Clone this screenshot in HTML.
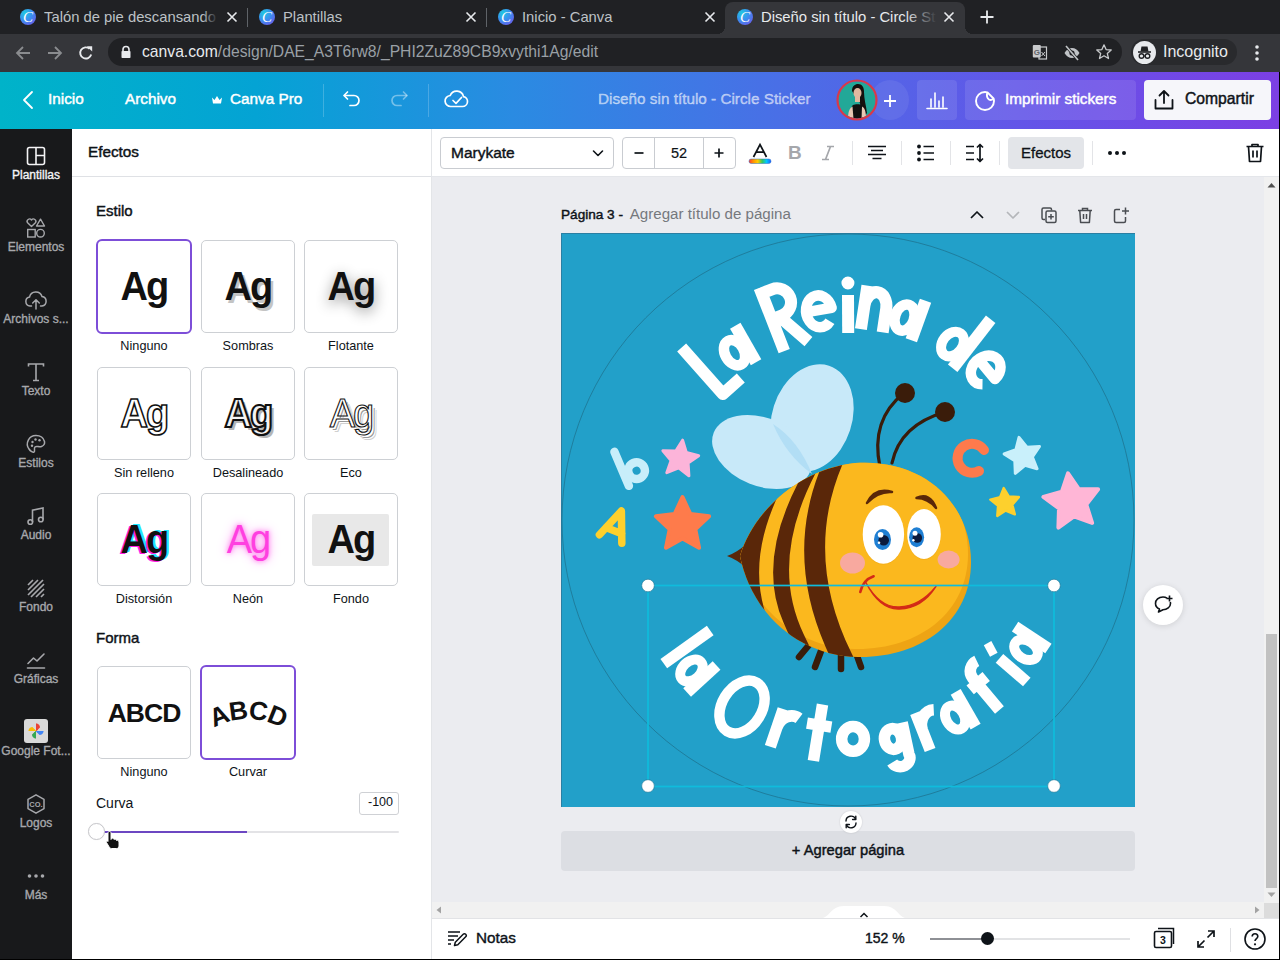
<!DOCTYPE html>
<html><head><meta charset="utf-8">
<style>
*{box-sizing:border-box;margin:0;padding:0}
html,body{width:1280px;height:960px;overflow:hidden;font-family:"Liberation Sans",sans-serif;background:#ebecf0}
.a{position:absolute}
svg{display:block}
#tabs{left:0;top:0;width:1280px;height:34px;background:#202124}
#addr{left:0;top:34px;width:1280px;height:38px;background:#35363a}
#hdr{left:0;top:72px;width:1280px;height:57px;background:linear-gradient(90deg,#00b3c9 0%,#04a3d4 20%,#2a8be2 40%,#4870e6 60%,#6355e8 80%,#7c3fe4 100%)}
#side{left:0;top:129px;width:72px;height:831px;background:#18191b}
#panel{left:72px;top:129px;width:360px;height:831px;background:#fff}
#tool{left:432px;top:129px;width:848px;height:48px;background:#fff;border-bottom:1px solid #e4e6ea}
#bot{left:432px;top:918px;width:848px;height:42px;background:#fff}
.tabt{top:8px;font-size:14.8px;line-height:18px;color:#bdc1c6;white-space:nowrap;overflow:hidden}
.fav{width:16px;height:16px;border-radius:50%;background:radial-gradient(circle at 30% 25%,#1fc8e0 0%,#3a8ef0 45%,#7a4ae8 100%)}
.fav i{position:absolute;left:3px;top:-1px;font-family:"Liberation Serif",serif;font-style:italic;font-size:15px;color:#fff;line-height:18px}
.ht{top:17px;font-size:15.3px;line-height:20px;font-weight:normal;-webkit-text-stroke:0.45px currentColor;color:#fff;white-space:nowrap}
.sl{left:0;width:72px;text-align:center;font-size:12px;line-height:14px;font-weight:normal;-webkit-text-stroke:0.35px currentColor;white-space:nowrap}
.ph{font-size:15px;font-weight:normal;-webkit-text-stroke:0.45px currentColor;line-height:18px;color:#0e1318;white-space:nowrap}
.tile{border:1px solid #cdd0d4;border-radius:5px;background:#fff}
.tile.sel{border:2px solid #7d4ed8;border-radius:6px}
.ag{width:94px;text-align:center;font-size:40px;line-height:44px;font-weight:bold;color:#111;letter-spacing:-2px;transform:scaleX(0.95)}
.tl{width:114px;text-align:center;font-size:12.7px;line-height:16px;color:#0e1318;white-space:nowrap}
.tb{font-size:15.4px;font-weight:normal;-webkit-text-stroke:0.4px currentColor;line-height:20px;color:#0e1318;white-space:nowrap}
</style></head><body>
<div id="tabs" class="a">
  <div class="a" style="left:725px;top:2px;width:240px;height:34px;background:#35363a;border-radius:8px 8px 0 0"></div>
  <div class="a" style="left:717px;top:26px;width:8px;height:8px;background:radial-gradient(circle at 0 0,#202124 8px,#35363a 8px)"></div>
  <div class="a" style="left:965px;top:26px;width:8px;height:8px;background:radial-gradient(circle at 100% 0,#202124 8px,#35363a 8px)"></div>
  <div class="a" style="left:247px;top:8px;width:1px;height:19px;background:#5f6368"></div>
  <div class="a" style="left:486px;top:8px;width:1px;height:19px;background:#5f6368"></div>
  <!-- favicons -->
  <div class="fav a" style="left:20px;top:9px"><i>C</i></div>
  <div class="fav a" style="left:259px;top:9px"><i>C</i></div>
  <div class="fav a" style="left:498px;top:9px"><i>C</i></div>
  <div class="fav a" style="left:737px;top:9px"><i>C</i></div>
  <div class="a tabt" style="left:44px;width:174px;">Talón de pie descansando s</div>
  <div class="a tabt" style="left:283px;width:170px;">Plantillas</div>
  <div class="a tabt" style="left:522px;width:170px;">Inicio - Canva</div>
  <div class="a tabt" style="left:761px;width:176px;color:#e8eaed">Diseño sin título - Circle St</div>
  <div class="a" style="left:202px;top:6px;width:16px;height:22px;background:linear-gradient(90deg,rgba(32,33,36,0),#202124)"></div>
  <div class="a" style="left:905px;top:6px;width:32px;height:22px;background:linear-gradient(90deg,rgba(53,54,58,0),#35363a)"></div>
  <svg class="a" style="left:226px;top:11px" width="12" height="12"><path d="M1.5 1.5L10.5 10.5M10.5 1.5L1.5 10.5" stroke="#e8eaed" stroke-width="1.6"/></svg>
  <svg class="a" style="left:465px;top:11px" width="12" height="12"><path d="M1.5 1.5L10.5 10.5M10.5 1.5L1.5 10.5" stroke="#e8eaed" stroke-width="1.6"/></svg>
  <svg class="a" style="left:704px;top:11px" width="12" height="12"><path d="M1.5 1.5L10.5 10.5M10.5 1.5L1.5 10.5" stroke="#e8eaed" stroke-width="1.6"/></svg>
  <svg class="a" style="left:943px;top:11px" width="12" height="12"><path d="M1.5 1.5L10.5 10.5M10.5 1.5L1.5 10.5" stroke="#e8eaed" stroke-width="1.6"/></svg>
  <svg class="a" style="left:979px;top:9px" width="16" height="16"><path d="M8 1.5V14.5M1.5 8H14.5" stroke="#e8eaed" stroke-width="1.8"/></svg>
</div>
<div id="addr" class="a">
  <svg class="a" style="left:14px;top:10px" width="18" height="18"><path d="M16 9H3M9 3L3 9L9 15" stroke="#8a8c8f" stroke-width="1.8" fill="none"/></svg>
  <svg class="a" style="left:46px;top:10px" width="18" height="18"><path d="M2 9H15M9 3L15 9L9 15" stroke="#8a8c8f" stroke-width="1.8" fill="none"/></svg>
  <svg class="a" style="left:77px;top:10px" width="18" height="18"><path d="M14.2 10.5A5.6 5.6 0 1 1 12.6 4.8" stroke="#e8eaed" stroke-width="1.9" fill="none"/><path d="M9.8 2.2H15.2V7.6Z" fill="#e8eaed"/></svg>
  <div class="a" style="left:108px;top:4px;width:1014px;height:28px;border-radius:14px;background:#202124"></div>
  <svg class="a" style="left:120px;top:11px" width="12" height="14"><path d="M3 6V4.5A3 3 0 0 1 9 4.5V6" stroke="#e8eaed" stroke-width="1.6" fill="none"/><rect x="1.5" y="6" width="9" height="7" rx="0.8" fill="#e8eaed"/></svg>
  <div class="a" style="left:142px;top:9px;font-size:15.7px;line-height:18px;color:#9aa0a6;white-space:nowrap"><span style="color:#e8eaed">canva.com</span>/design/DAE_A3T6rw8/_PHI2ZuZ89CB9xvythi1Ag/edit</div>
  <!-- translate -->
  <svg class="a" style="left:1032px;top:10px" width="18" height="18"><rect x="7" y="3" width="7.5" height="12" fill="none" stroke="#c8cacc" stroke-width="1.2"/><rect x="0.8" y="1" width="8" height="12.5" rx="1" fill="#c8cacc"/><text x="1.8" y="10.5" font-size="8" font-family="Liberation Sans" font-weight="bold" fill="#5f6368">G</text><path d="M9.5 8L13 12M13 8L9.5 12" stroke="#c8cacc" stroke-width="1"/></svg>
  <!-- eye off -->
  <svg class="a" style="left:1063px;top:10px" width="18" height="18"><path d="M1.5 9C3.5 5.5 6 4 9 4S14.5 5.5 16.5 9C14.5 12.5 12 14 9 14S3.5 12.5 1.5 9Z" fill="#c0c3c6"/><circle cx="9" cy="9" r="2.6" fill="#202124"/><path d="M3 2L15 16" stroke="#202124" stroke-width="3"/><path d="M3 2L15 16" stroke="#c0c3c6" stroke-width="1.6"/></svg>
  <!-- star -->
  <svg class="a" style="left:1095px;top:9px" width="18" height="18"><path d="M9 1.8L11.1 6.6L16.2 7L12.3 10.4L13.5 15.5L9 12.8L4.5 15.5L5.7 10.4L1.8 7L6.9 6.6Z" stroke="#c8cacc" stroke-width="1.3" fill="none" stroke-linejoin="round"/></svg>
  <div class="a" style="left:1131px;top:5px;width:106px;height:26px;border-radius:13px;background:#292a2d"></div>
  <div class="a" style="left:1133px;top:7px;width:23px;height:23px;border-radius:50%;background:#e8eaed"></div>
  <svg class="a" style="left:1133px;top:7px" width="23" height="23"><path d="M5 11H18" stroke="#202124" stroke-width="1.6"/><path d="M7.5 10.5L8.5 5.5H14.5L15.5 10.5Z" fill="#202124"/><circle cx="8.5" cy="15" r="2.3" stroke="#202124" stroke-width="1.4" fill="none"/><circle cx="14.5" cy="15" r="2.3" stroke="#202124" stroke-width="1.4" fill="none"/><path d="M10.8 15H12.2" stroke="#202124" stroke-width="1.2"/></svg>
  <div class="a" style="left:1163px;top:8px;font-size:16px;line-height:20px;color:#e8eaed">Incognito</div>
  <svg class="a" style="left:1253px;top:9px" width="8" height="20"><circle cx="4" cy="4" r="1.8" fill="#e8eaed"/><circle cx="4" cy="10" r="1.8" fill="#e8eaed"/><circle cx="4" cy="16" r="1.8" fill="#e8eaed"/></svg>
</div>
<div id="hdr" class="a">
  <svg class="a" style="left:21px;top:18px" width="14" height="20"><path d="M11 2L3 10L11 18" stroke="#fff" stroke-width="1.8" fill="none" stroke-linecap="round" stroke-linejoin="round"/></svg>
  <div class="a ht" style="left:48px">Inicio</div>
  <div class="a ht" style="left:125px">Archivo</div>
  <svg class="a" style="left:211px;top:23px" width="12" height="10"><path d="M1 2.5L3.5 5L6 1L8.5 5L11 2.5L10 8.5H2Z" fill="#fff"/></svg>
  <div class="a ht" style="left:230px">Canva Pro</div>
  <div class="a" style="left:323px;top:12px;width:1px;height:33px;background:rgba(255,255,255,0.2)"></div>
  <svg class="a" style="left:341px;top:17px" width="22" height="22"><path d="M6.5 3L3 6.5L6.5 10" stroke="#fff" stroke-width="1.7" fill="none" stroke-linecap="round" stroke-linejoin="round"/><path d="M3.5 6.5H13A5 5 0 0 1 13 16.5H9" stroke="#fff" stroke-width="1.7" fill="none" stroke-linecap="round"/></svg>
  <svg class="a" style="left:388px;top:17px" width="22" height="22"><path d="M15.5 3L19 6.5L15.5 10" stroke="rgba(255,255,255,0.4)" stroke-width="1.7" fill="none" stroke-linecap="round" stroke-linejoin="round"/><path d="M18.5 6.5H9A5 5 0 0 0 9 16.5H13" stroke="rgba(255,255,255,0.4)" stroke-width="1.7" fill="none" stroke-linecap="round"/></svg>
  <div class="a" style="left:428px;top:12px;width:1px;height:33px;background:rgba(255,255,255,0.2)"></div>
  <svg class="a" style="left:444px;top:15px" width="26" height="24"><path d="M7 19.5H18.5A5 5 0 0 0 19.5 9.6A7 7 0 0 0 6.2 8.5A5.5 5.5 0 0 0 7 19.5Z" stroke="#fff" stroke-width="1.7" fill="none" stroke-linejoin="round"/><path d="M9 13.5L12 16.3L17.5 10.5" stroke="#fff" stroke-width="1.7" fill="none" stroke-linecap="round" stroke-linejoin="round"/></svg>
  <div class="a ht" style="left:598px;color:rgba(255,255,255,0.55)">Diseño sin título - Circle Sticker</div>
  <!-- avatar -->
  <div class="a" style="left:871px;top:8px;width:38px;height:40px;border-radius:50%;background:rgba(255,255,255,0.07)"></div>
  <svg class="a" style="left:836px;top:7px" width="42" height="42">
    <defs><clipPath id="av"><circle cx="21" cy="21" r="18.5"/></clipPath></defs>
    <circle cx="21" cy="21" r="18.5" fill="#22a898"/>
    <g clip-path="url(#av)">
      <path d="M16 12C16 7 19 5 22 5C26 5 28 8 28 13C28 20 30 26 31 34L26 40L24 24Z" fill="#15110e"/>
      <ellipse cx="21.5" cy="14" rx="4" ry="5" fill="#e0b8a0"/>
      <path d="M19 18H24V23H19Z" fill="#e0b8a0"/>
      <path d="M13 42C13 33 15 28 17 26C19 25 24 25 26 26C28 28 30 33 30 42Z" fill="#111"/>
      <path d="M12 40C12 33 13.5 29 16.5 27.5L17.5 40Z" fill="#e8c8b4"/><path d="M30 40C30 33 29 29 26 27.5L25.5 40Z" fill="#e8c8b4"/>
    </g>
    <circle cx="21" cy="21" r="19.5" stroke="#d83a48" stroke-width="2.2" fill="none"/>
  </svg>
  <svg class="a" style="left:883px;top:22px" width="14" height="14"><path d="M7 1V13M1 7H13" stroke="#fff" stroke-width="1.8"/></svg>
  <div class="a" style="left:917px;top:8px;width:40px;height:40px;border-radius:4px;background:rgba(255,255,255,0.1)"></div>
  <svg class="a" style="left:925px;top:16px" width="24" height="24"><path d="M2 20.5H22M6 19V11M10 19V5M14 19V13M18 19V9" stroke="#fff" stroke-width="1.6" stroke-linecap="round"/></svg>
  <div class="a" style="left:965px;top:8px;width:171px;height:40px;border-radius:4px;background:rgba(255,255,255,0.1)"></div>
  <svg class="a" style="left:973px;top:17px" width="24" height="24"><path d="M12 3A9 9 0 1 0 21 12C21 11 20.8 10.4 20.6 9.6L14.4 3.4C13.6 3.2 13 3 12 3Z" stroke="#fff" stroke-width="1.9" fill="none"/><path d="M14.3 3.4C13.5 6.5 14 9 16 10.5C17.5 11.4 19 11 20.6 9.6" stroke="#fff" stroke-width="1.9" fill="none"/></svg>
  <div class="a ht" style="left:1005px">Imprimir stickers</div>
  <div class="a" style="left:1144px;top:8px;width:127px;height:40px;border-radius:4px;background:#f6f6fa"></div>
  <svg class="a" style="left:1152px;top:16px" width="24" height="24"><path d="M12 15V3.5M7.5 7.5L12 3L16.5 7.5" stroke="#0e1318" stroke-width="1.8" fill="none" stroke-linecap="round" stroke-linejoin="round"/><path d="M3.5 12V20.5H20.5V12" stroke="#0e1318" stroke-width="1.8" fill="none" stroke-linecap="round" stroke-linejoin="round"/></svg>
  <div class="a ht" style="left:1185px;color:#0e1318;font-size:15.7px">Compartir</div>
</div>
<div id="side" class="a">
<svg class="a" style="left:24px;top:15px" width="24" height="24"><rect x="3.5" y="3.5" width="17" height="17" rx="2" stroke="#f4f4f6" stroke-width="1.6" fill="none"/><path d="M12 3.5V20.5M12 11.5H20.5" stroke="#f4f4f6" stroke-width="1.6"/></svg>
<div class="a sl" style="top:39px;color:#f4f4f6">Plantillas</div>
<svg class="a" style="left:24px;top:87px" width="24" height="24"><path d="M7.5 10.5L3.6 6.8A2.2 2.2 0 0 1 7.5 4A2.2 2.2 0 0 1 11.4 6.8Z" stroke="#a7a8ac" stroke-width="1.4" fill="none" stroke-linejoin="round"/><path d="M16.5 3.2L20.5 10H12.5Z" stroke="#a7a8ac" stroke-width="1.4" fill="none" stroke-linejoin="round"/><rect x="3.7" y="13.5" width="7.5" height="7.5" stroke="#a7a8ac" stroke-width="1.4" fill="none"/><circle cx="16.5" cy="17.2" r="3.8" stroke="#a7a8ac" stroke-width="1.4" fill="none"/></svg>
<div class="a sl" style="top:111px;color:#a7a8ac">Elementos</div>
<svg class="a" style="left:24px;top:159px" width="24" height="24"><path d="M7.5 18H6A4.5 4.5 0 0 1 5.5 9.1A6.5 6.5 0 0 1 18 8.5A4.8 4.8 0 0 1 18 18H16.5" stroke="#a7a8ac" stroke-width="1.5" fill="none" stroke-linecap="round"/><path d="M12 21V12M8.7 15L12 11.7L15.3 15" stroke="#a7a8ac" stroke-width="1.5" fill="none" stroke-linecap="round" stroke-linejoin="round"/></svg>
<div class="a sl" style="top:183px;color:#a7a8ac">Archivos s...</div>
<svg class="a" style="left:24px;top:231px" width="24" height="24"><path d="M4.5 6.5V4H19.5V6.5M12 4V20.5M9 20.5H15" stroke="#a7a8ac" stroke-width="1.6" fill="none"/></svg>
<div class="a sl" style="top:255px;color:#a7a8ac">Texto</div>
<svg class="a" style="left:24px;top:303px" width="24" height="24"><path d="M12 3.5A8.5 8.5 0 0 0 5 17C6.5 19.5 9 20.5 10 20C11.5 19.2 9.5 16.5 11 15C12.5 13.5 15 15.5 17.5 14.5C20 13.5 20.8 11 20.5 9.5C19.5 5.8 16 3.5 12 3.5Z" stroke="#a7a8ac" stroke-width="1.5" fill="none"/><circle cx="8.5" cy="10" r="1.2" fill="#a7a8ac"/><circle cx="11.5" cy="7.5" r="1.2" fill="#a7a8ac"/><circle cx="15.5" cy="8.2" r="1.2" fill="#a7a8ac"/><circle cx="8" cy="13.8" r="1.2" fill="#a7a8ac"/></svg>
<div class="a sl" style="top:327px;color:#a7a8ac">Estilos</div>
<svg class="a" style="left:24px;top:375px" width="24" height="24"><path d="M8.5 18V6.2L19 4V15.5" stroke="#a7a8ac" stroke-width="1.6" fill="none"/><circle cx="6.3" cy="18" r="2.3" stroke="#a7a8ac" stroke-width="1.6" fill="none"/><circle cx="16.8" cy="15.5" r="2.3" stroke="#a7a8ac" stroke-width="1.6" fill="none"/></svg>
<div class="a sl" style="top:399px;color:#a7a8ac">Audio</div>
<svg class="a" style="left:24px;top:447px" width="24" height="24"><path d="M4 9L9 4M4 14L14 4M4 19L19 4M7 21L20 8M12 21L20 13M17 21L20 18" stroke="#a7a8ac" stroke-width="1.7"/></svg>
<div class="a sl" style="top:471px;color:#a7a8ac">Fondo</div>
<svg class="a" style="left:24px;top:519px" width="24" height="24"><path d="M4 15.5L9.5 10L13 13L20 6" stroke="#a7a8ac" stroke-width="1.6" fill="none" stroke-linecap="round" stroke-linejoin="round"/><path d="M3.5 20H20.5" stroke="#a7a8ac" stroke-width="1.6" stroke-linecap="round"/></svg>
<div class="a sl" style="top:543px;color:#a7a8ac">Gráficas</div>
<div class="a" style="left:24px;top:590px;width:24px;height:24px;border-radius:3px;background:#d9d9d9"></div><svg class="a" style="left:24px;top:590px" width="24" height="24"><path d="M12 12V4.5A4 4 0 0 1 12 12Z" fill="#ea4335"/><path d="M12 12H19.5A4 4 0 0 1 12 12Z" fill="#4285f4"/><path d="M12 12V19.5A4 4 0 0 1 12 12Z" fill="#34a853"/><path d="M12 12H4.5A4 4 0 0 1 12 12Z" fill="#fbbc04"/><path d="M12 12L12 4.5C14.5 4.5 16 6.5 16 8.5L12 12Z" fill="#ea4335"/><path d="M12 12H19.5C19.5 14.5 17.5 16 15.5 16Z" fill="#4285f4"/><path d="M12 12V19.5C9.5 19.5 8 17.5 8 15.5Z" fill="#34a853"/><path d="M12 12H4.5C4.5 9.5 6.5 8 8.5 8Z" fill="#fbbc04"/></svg>
<div class="a sl" style="top:615px;color:#a7a8ac">Google Fot...</div>
<svg class="a" style="left:24px;top:663px" width="24" height="24"><path d="M12 2.8L20 7.4V16.6L12 21.2L4 16.6V7.4Z" stroke="#a7a8ac" stroke-width="1.5" fill="none" stroke-linejoin="round"/><text x="12" y="15" text-anchor="middle" font-family="Liberation Sans" font-weight="bold" font-size="7.5" fill="#a7a8ac">CO.</text></svg>
<div class="a sl" style="top:687px;color:#a7a8ac">Logos</div>
<svg class="a" style="left:24px;top:735px" width="24" height="24"><circle cx="5.5" cy="12" r="1.8" fill="#a7a8ac"/><circle cx="12" cy="12" r="1.8" fill="#a7a8ac"/><circle cx="18.5" cy="12" r="1.8" fill="#a7a8ac"/></svg>
<div class="a sl" style="top:759px;color:#a7a8ac">Más</div>
</div>
<div id="panel" class="a">
<div class="a" style="left:0;top:47px;width:359px;height:1px;background:#dfe1e5"></div>
<div class="a" style="left:359px;top:0;width:1px;height:831px;background:#e3e5e8"></div>
<div class="a ph" style="left:16px;top:14px;font-size:15.3px">Efectos</div>
<div class="a ph" style="left:24px;top:73px">Estilo</div>
<div class="a tile sel" style="left:24px;top:110px;width:96px;height:95px"></div>
<div class="a ag" style="left:25px;top:135px;">Ag</div>
<div class="a tl" style="left:15px;top:209px">Ninguno</div>
<div class="a tile" style="left:129px;top:111px;width:94px;height:93px"></div>
<div class="a ag" style="left:129px;top:135px;text-shadow:2.5px 2.5px 0 #c4c4c4">Ag</div>
<div class="a tl" style="left:119px;top:209px">Sombras</div>
<div class="a tile" style="left:232px;top:111px;width:94px;height:93px"></div>
<div class="a ag" style="left:232px;top:135px;text-shadow:0 4px 14px rgba(0,0,0,0.45)">Ag</div>
<div class="a tl" style="left:222px;top:209px">Flotante</div>
<div class="a tile" style="left:25px;top:238px;width:94px;height:93px"></div>
<div class="a ag" style="left:25px;top:262px;color:#fff;-webkit-text-stroke:1.6px #111">Ag</div>
<div class="a tl" style="left:15px;top:336px">Sin relleno</div>
<div class="a tile" style="left:129px;top:238px;width:94px;height:93px"></div>
<div class="a ag" style="left:129px;top:262px;color:#f4f4f4;-webkit-text-stroke:2.2px #111;text-shadow:3px 3px 0 #b5b5b5">Ag</div>
<div class="a tl" style="left:119px;top:336px">Desalineado</div>
<div class="a tile" style="left:232px;top:238px;width:94px;height:93px"></div>
<div class="a ag" style="left:232px;top:262px;color:transparent;-webkit-text-stroke:1.1px #111;font-weight:normal;text-shadow:2px 2px 0 #fff,3px 3px 0 #999,4px 4px 0 #fff,5px 5px 0 #d0d0d0">Ag</div>
<div class="a tl" style="left:222px;top:336px">Eco</div>
<div class="a tile" style="left:25px;top:364px;width:94px;height:93px"></div>
<div class="a ag" style="left:25px;top:388px;text-shadow:-2px 1px 0 #ff1ee6,2px -1px 0 #1ee8ff">Ag</div>
<div class="a tl" style="left:15px;top:462px">Distorsión</div>
<div class="a tile" style="left:129px;top:364px;width:94px;height:93px"></div>
<div class="a ag" style="left:129px;top:388px;color:#ff40e0;font-weight:normal;text-shadow:0 0 6px #ff70ee,0 0 12px #ff9ef3">Ag</div>
<div class="a tl" style="left:119px;top:462px">Neón</div>
<div class="a tile" style="left:232px;top:364px;width:94px;height:93px"></div>
<div class="a" style="left:240px;top:385px;width:77px;height:52px;background:#e8e8e8;border-radius:2px"></div>
<div class="a ag" style="left:232px;top:388px;">Ag</div>
<div class="a tl" style="left:222px;top:462px">Fondo</div>
<div class="a ph" style="left:24px;top:500px">Forma</div>
<div class="a tile" style="left:25px;top:537px;width:94px;height:93px"></div>
<div class="a" style="left:25px;top:569px;width:94px;text-align:center;font-weight:bold;font-size:26.5px;line-height:30px;color:#111;letter-spacing:-1px">ABCD</div>
<div class="a tl" style="left:15px;top:635px">Ninguno</div>
<div class="a tile sel" style="left:128px;top:536px;width:96px;height:95px"></div>
<svg class="a" style="left:129px;top:537px" width="94" height="93"><defs><path id="arcA" d="M6 66 Q47 40 88 66"/></defs>
<text font-family="Liberation Sans" font-weight="bold" font-size="26" fill="#111" letter-spacing="-1"><textPath href="#arcA" startOffset="50%" text-anchor="middle">ABCD</textPath></text></svg>
<div class="a tl" style="left:119px;top:635px">Curvar</div>
<div class="a" style="left:24px;top:665px;font-size:14px;line-height:18px;color:#0e1318">Curva</div>
<div class="a" style="left:287px;top:663px;width:40px;height:23px;border:1px solid #cfd1d5;border-radius:3px;font-size:12.5px;line-height:18px;text-align:right;padding-right:5px;color:#0e1318">-100</div>
<div class="a" style="left:24px;top:702px;width:303px;height:2px;border-radius:1px;background:#e3e3e6"></div>
<div class="a" style="left:28px;top:702px;width:147px;height:2px;background:#6c47c2"></div>
<div class="a" style="left:16px;top:694px;width:17px;height:17px;border-radius:50%;background:#fff;border:1px solid #c8c8cc;box-shadow:0 0 1px rgba(0,0,0,0.1)"></div>
<svg class="a" style="left:33px;top:701px" width="18" height="20"><path d="M4.5 1.5C5.5 1.5 6 2 6 3V9.5L6.5 8.5C7 8 8 8 8.5 8.5L9 9.5C9.5 9 10.5 9 11 9.5L11.5 10.5C12 10 13 10 13.5 10.8L14 12V16C14 17.5 13 18.5 11.5 18.5H6.5C5.5 18.5 4.8 18 4.3 17.2L1.5 12.5C1 11.7 1.8 10.8 2.7 11.2L3 11.5V3C3 2 3.5 1.5 4.5 1.5Z" fill="#111" stroke="#fff" stroke-width="1"/></svg>
</div>
<div class="a" style="left:432px;top:177px;width:848px;height:741px;background:#ebecf0"></div>
<div class="a ph" style="left:561px;top:205px;font-size:13.6px;color:#0e1318">Página 3 - <span style="-webkit-text-stroke:0;color:#75787d;font-size:15.1px;margin-left:3px">Agregar título de página</span></div>
<svg class="a" style="left:967px;top:205px" width="20" height="20"><path d="M4 13L10 7L16 13" stroke="#0e1318" stroke-width="1.7" fill="none" stroke-linejoin="round"/></svg>
<svg class="a" style="left:1003px;top:205px" width="20" height="20"><path d="M4 7L10 13L16 7" stroke="#b4b6ba" stroke-width="1.7" fill="none" stroke-linejoin="round"/></svg>
<svg class="a" style="left:1039px;top:205px" width="20" height="20"><path d="M6 14.5H4.5C3.5 14.5 3 14 3 13V4.5C3 3.5 3.5 3 4.5 3H11C12 3 12.5 3.5 12.5 4.5V5.5" stroke="#4a4d52" stroke-width="1.5" fill="none"/><rect x="7" y="6" width="10" height="11.5" rx="1.5" stroke="#4a4d52" stroke-width="1.5" fill="none"/><path d="M12 9V14.5M9.2 11.8H14.8" stroke="#4a4d52" stroke-width="1.5"/></svg>
<svg class="a" style="left:1075px;top:205px" width="20" height="20"><path d="M3 5.5H17M7.5 5.5V3.5H12.5V5.5" stroke="#4a4d52" stroke-width="1.5" fill="none"/><path d="M4.8 5.5L5.6 17.5H14.4L15.2 5.5" stroke="#4a4d52" stroke-width="1.5" fill="none" stroke-linejoin="round"/><path d="M8.5 9V14M11.5 9V14" stroke="#4a4d52" stroke-width="1.5"/></svg>
<svg class="a" style="left:1111px;top:205px" width="20" height="20"><path d="M9 4.5H5C4 4.5 3.5 5 3.5 6V16C3.5 17 4 17.5 5 17.5H13C14 17.5 14.5 17 14.5 16V12" stroke="#4a4d52" stroke-width="1.5" fill="none"/><path d="M14.5 2.5V9.5M11 6H18" stroke="#4a4d52" stroke-width="1.5"/></svg>
<!-- design placeholder -->
<div id="design" class="a" style="left:561px;top:233px;width:574px;height:574px;background:#26a1cd"></div>
<div class="a" style="left:561px;top:831px;width:574px;height:40px;border-radius:4px;background:#dcdee3"></div>
<div class="a ph" style="left:561px;top:841px;width:574px;text-align:center;font-size:14.7px;font-weight:normal;-webkit-text-stroke:0.45px #0e1318;color:#0e1318">+ Agregar página</div>
<div class="a" style="left:1143px;top:585px;width:40px;height:40px;border-radius:50%;background:#fff;box-shadow:0 1px 6px rgba(0,0,0,0.12)"></div>
<svg class="a" style="left:1151px;top:593px" width="24" height="24"><path d="M16 5.2C15 4.5 13.6 4 12 4C7.5 4 4.5 7 4.5 10.5C4.5 13 6 15 8.5 16L7.5 19L12 16.8C16 16.8 19.5 14 19.5 10.5C19.5 10 19.4 9.5 19.3 9" stroke="#0e1318" stroke-width="1.6" fill="none" stroke-linejoin="round"/><path d="M18.5 2.5V8.5M15.5 5.5H21.5" stroke="#0e1318" stroke-width="1.6"/></svg>
<!-- scrollbars -->
<div class="a" style="left:1264px;top:177px;width:15px;height:726px;background:#f1f1f1"></div>
<svg class="a" style="left:1264px;top:180px" width="15" height="10"><path d="M3.5 7.5L7.5 3L11.5 7.5Z" fill="#505050"/></svg>
<div class="a" style="left:1266px;top:634px;width:11px;height:254px;background:#c1c1c1"></div>
<svg class="a" style="left:1264px;top:890px" width="15" height="10"><path d="M3.5 2.5L7.5 7L11.5 2.5Z" fill="#a3a3a3"/></svg>
<div class="a" style="left:432px;top:902px;width:832px;height:16px;background:#f1f1f1"></div>
<svg class="a" style="left:434px;top:905px" width="10" height="10"><path d="M7 1.5L2.5 5L7 8.5Z" fill="#a3a3a3"/></svg>
<svg class="a" style="left:1252px;top:905px" width="10" height="10"><path d="M3 1.5L7.5 5L3 8.5Z" fill="#a3a3a3"/></svg>
<div class="a" style="left:1264px;top:903px;width:15px;height:15px;background:#dcdcdc"></div>
<svg class="a" style="left:561px;top:233px" width="574" height="574" viewBox="561 233 574 574">
<rect x="561" y="233" width="574" height="574" fill="#22a0c9"/><path d="M561.5 807V233.5H1135" stroke="#2a7fa3" stroke-width="1" fill="none"/>
<circle cx="848" cy="520" r="286" fill="none" stroke="#1d6f8c" stroke-width="0.9" opacity="0.8"/>
<polygon points="682.6,440.2 686.3,452.5 698.7,455.7 688.1,462.9 688.9,475.8 678.7,467.9 666.8,472.7 671.1,460.6 662.9,450.7 675.8,451.1" fill="#fcb4d9" stroke="#fcb4d9" stroke-width="3" stroke-linejoin="round"/>
<polygon points="682.5,497.0 690.4,514.1 709.1,516.3 695.3,529.2 699.0,547.7 682.5,538.5 666.0,547.7 669.7,529.2 655.9,516.3 674.6,514.1" fill="#fe7b4b" stroke="#fe7b4b" stroke-width="4" stroke-linejoin="round"/>
<polygon points="1019.0,437.4 1026.9,447.3 1039.5,446.5 1032.4,457.0 1037.1,468.7 1025.0,465.3 1015.3,473.4 1014.8,460.8 1004.1,454.0 1015.9,449.6" fill="#c9f0fb" stroke="#c9f0fb" stroke-width="3" stroke-linejoin="round"/>
<polygon points="1003.7,488.1 1008.9,496.6 1018.8,497.1 1012.3,504.7 1014.8,514.3 1005.7,510.5 997.3,515.9 998.1,505.9 990.4,499.6 1000.1,497.3" fill="#fdd02d" stroke="#fdd02d" stroke-width="2.5" stroke-linejoin="round"/>
<polygon points="1068.0,473.3 1078.8,489.2 1098.1,489.3 1086.3,504.5 1092.1,522.9 1074.0,516.4 1058.4,527.6 1059.0,508.4 1043.4,497.0 1061.9,491.6" fill="#ffb6d6" stroke="#ffb6d6" stroke-width="4" stroke-linejoin="round"/>
<path d="M984 450A14.5 14.5 0 1 0 979 471" stroke="#fe7a4c" stroke-width="10" fill="none" stroke-linecap="round"/>
<g transform="rotate(-23 630 468)"><path d="M622 447V484" stroke="#c8eefa" stroke-width="8.5" stroke-linecap="round"/><circle cx="635" cy="473" r="8.3" stroke="#c8eefa" stroke-width="8.5" fill="none"/></g>
<g transform="rotate(21 616 525)"><path d="M604 540L616 510L628 540M607.5 531H624.5" stroke="#fdd02d" stroke-width="7.5" fill="none" stroke-linecap="round" stroke-linejoin="round"/></g>
<ellipse cx="812" cy="418" rx="40" ry="55" transform="rotate(18 812 418)" fill="#c8e9f9"/>
<ellipse cx="762" cy="452" rx="52" ry="34" transform="rotate(22 762 452)" fill="#c8e9f9"/>
<path d="M773 424Q798 440 812 474Q786 455 773 424Z" fill="#b2def5"/>
<path d="M880 467Q870 420 904 393" stroke="#3a1c0a" stroke-width="3.2" fill="none" stroke-linecap="round"/><circle cx="905" cy="393" r="10" fill="#3a1c0a"/>
<path d="M892 463Q900 425 945 412" stroke="#3a1c0a" stroke-width="3.2" fill="none" stroke-linecap="round"/><circle cx="945" cy="412" r="10" fill="#3a1c0a"/>
<path d="M809 645L799 657" stroke="#3a1c0a" stroke-width="6.5" stroke-linecap="round"/><path d="M821 651L815 667" stroke="#3a1c0a" stroke-width="6.5" stroke-linecap="round"/><path d="M841 653L841 669" stroke="#3a1c0a" stroke-width="6.5" stroke-linecap="round"/><path d="M856 653L861 667" stroke="#3a1c0a" stroke-width="6.5" stroke-linecap="round"/>
<defs><clipPath id="bodyc"><path d="M740 556C752 515 795 470 855 463C925 458 971 505 971 562C971 622 920 658 858 657C800 656 752 615 740 556Z"/></clipPath></defs>
<path d="M746 544Q738 552 727 556Q738 560 746 568Z" fill="#5a2709"/>
<path d="M740 556C752 515 795 470 855 463C925 458 971 505 971 562C971 622 920 658 858 657C800 656 752 615 740 556Z" fill="#eea414"/>
<g clip-path="url(#bodyc)">
<path d="M740 556C752 515 795 470 855 463C925 458 971 505 971 562C971 622 920 658 858 657C800 656 752 615 740 556Z" transform="translate(-3 -8)" fill="#fbb81e"/>
<path d="M700 440H778.7L778.7 494.3Q749 557 764.3 609.3L764.3 680H700Z" fill="#5a2709"/>
<path d="M818.1 444.0L797.8 483.5Q757.1 562.6 783.5 622.5L796.7 652.5L821.1 670.6L803.8 634.4Q769.2 562.0 815.8 472.8L839.1 428.2Z" fill="#5a2709"/>
<path d="M836.0 429.1L819.4 471.6Q786.2 556.6 825.4 646.4L845.0 691.3L875.6 702.2L851.7 653.6Q803.8 556.3 842.2 464.9L861.4 419.2Z" fill="#5a2709"/>
</g>
<ellipse cx="852.5" cy="563" rx="12.5" ry="10.5" fill="#f8a99f"/><ellipse cx="948.6" cy="559.5" rx="11" ry="9" fill="#f8a99f"/>
<ellipse cx="883.4" cy="535.5" rx="20.7" ry="29.3" fill="#f0a818" opacity="0.5"/><ellipse cx="924" cy="535" rx="16.8" ry="25" fill="#f0a818" opacity="0.5"/>
<ellipse cx="883.4" cy="534.5" rx="20.7" ry="29.3" fill="#fff"/><ellipse cx="924" cy="534" rx="16.8" ry="25" fill="#fff"/>
<ellipse cx="882.5" cy="539.5" rx="8.5" ry="10.5" fill="#1f7fd3"/><ellipse cx="916.6" cy="537.2" rx="7.5" ry="10" fill="#1f7fd3"/>
<circle cx="883.7" cy="540.3" r="5.3" fill="#0b1a3c"/><circle cx="917.3" cy="538" r="4.8" fill="#0b1a3c"/>
<circle cx="880.6" cy="534.8" r="2.8" fill="#fff"/><circle cx="879" cy="542.7" r="1.3" fill="#fff"/>
<circle cx="915" cy="533.3" r="2.5" fill="#fff"/><circle cx="913.4" cy="540.3" r="1.2" fill="#fff"/>
<path d="M867 503Q875 487 892 492Q878 491 867 503Z" fill="#5a2709" stroke="#5a2709" stroke-width="2.5" stroke-linejoin="round"/>
<path d="M916.5 498Q930 492 936 508Q928 498 916.5 498Z" fill="#5a2709" stroke="#5a2709" stroke-width="2.5" stroke-linejoin="round"/>
<path d="M865.8 582.5Q880 610 899.4 609Q922 608.5 936 586.4Q920 606 899.4 607Q880 608 865.8 582.5Z" fill="#d32a17" stroke="#d32a17" stroke-width="1.4" stroke-linejoin="round"/>
<path d="M873.6 576.3Q863 580 860.3 592" stroke="#d32a17" stroke-width="2.6" fill="none" stroke-linecap="round"/>

<g fill="none" stroke="#fff" stroke-linejoin="round">
<g transform="translate(733.6 392.4) rotate(-41.7) scale(1.0)" stroke-width="12.0"><path d="M-9 -68V-6H15" /></g>
<g transform="translate(747.4 367.2) rotate(-29.7) scale(1.0)" stroke-width="12.0"><ellipse cx="-4" cy="-19" rx="9.5" ry="13.5" stroke-width="10.5"/><path d="M10 -42V0"/></g>
<g transform="translate(795.4 346.7) rotate(-21.3) scale(1.0)" stroke-width="12.0"><path d="M-12 -68V0M-12 -62H-1A14 14 0 0 1 -1 -34H-12M-4 -34L14 0"/></g>
<g transform="translate(822.4 330.7) rotate(-9.8) scale(1.0)" stroke-width="12.0"><path d="M-12 -21H13A13 16 0 1 0 9 -8" stroke-width="10.5"/></g>
<g transform="translate(848.2 333.0) rotate(-0.3) scale(1.0)" stroke-width="12.0"><path d="M0 -38V0"/><circle cx="0" cy="-50" r="6.5" stroke="none" fill="#fff"/></g>
<g transform="translate(871.8 330.8) rotate(8.5) scale(1.0)" stroke-width="12.0"><path d="M-11 -44V0M-11 -24A11 15 0 0 1 11 -24V0"/></g>
<g transform="translate(901.9 336.8) rotate(19.8) scale(1.0)" stroke-width="12.0"><ellipse cx="-4" cy="-19" rx="9.5" ry="13.5" stroke-width="10.5"/><path d="M10 -42V0"/></g>
<g transform="translate(944.0 361.5) rotate(37.8) scale(1.0)" stroke-width="12.0"><ellipse cx="-4" cy="-19" rx="10" ry="13.5" stroke-width="10"/><path d="M11 -62V0"/></g>
<g transform="translate(970.6 382.5) rotate(50.2) scale(1.0)" stroke-width="12.0"><path d="M-12 -21H13A13 16 0 1 0 9 -8" stroke-width="10.5"/></g>
<g transform="translate(663.8 663.6) rotate(-305.5) scale(0.95)" stroke-width="12.1"><path d="M0 -60V0"/></g>
<g transform="translate(680.7 685.4) rotate(-312.4) scale(0.95)" stroke-width="12.1"><ellipse cx="-4" cy="-19" rx="9.5" ry="13.5" stroke-width="10.5"/><path d="M10 -42V0"/></g>
<g transform="translate(724.6 735.3) rotate(-328.4) scale(0.95)" stroke-width="12.1"><ellipse cx="0" cy="-35" rx="21" ry="30" stroke-width="11"/></g>
<g transform="translate(776.6 748.9) rotate(-341.2) scale(0.95)" stroke-width="12.1"><path d="M-7 -42V0M-7 -22A15 18 0 0 1 12 -38"/></g>
<g transform="translate(813.4 760.8) rotate(-350.8) scale(0.95)" stroke-width="12.1"><path d="M0 -60V0M-13 -38H13"/></g>
<g transform="translate(853.2 757.0) rotate(-0.5) scale(0.95)" stroke-width="12.1"><ellipse cx="0" cy="-19" rx="12" ry="13"/></g>
<g transform="translate(901.2 763.5) rotate(-12.1) scale(0.95)" stroke-width="12.1"><ellipse cx="-3" cy="-27" rx="9" ry="11"/><path d="M10 -42V-8A9 8 0 0 1 -9 -3"/></g>
<g transform="translate(936.3 747.6) rotate(-21.4) scale(0.95)" stroke-width="12.1"><path d="M-7 -42V0M-7 -22A15 18 0 0 1 12 -38"/></g>
<g transform="translate(967.4 731.3) rotate(-30.0) scale(0.95)" stroke-width="12.1"><ellipse cx="-4" cy="-19" rx="9.5" ry="13.5" stroke-width="10.5"/><path d="M10 -42V0"/></g>
<g transform="translate(1000.9 708.8) rotate(-40.0) scale(0.95)" stroke-width="12.1"><path d="M-2 0V-44A12 12 0 0 1 13 -55M-12 -36H10"/></g>
<g transform="translate(1026.8 682.0) rotate(-49.2) scale(0.95)" stroke-width="12.1"><path d="M0 -38V0"/><path d="M-1 -45L4 -58" stroke-width="9"/></g>
<g transform="translate(1043.2 656.5) rotate(-56.7) scale(0.95)" stroke-width="12.1"><ellipse cx="-4" cy="-19" rx="9.5" ry="13.5" stroke-width="10.5"/><path d="M10 -42V0"/></g>
</g>
<rect x="648" y="585.5" width="406" height="201" fill="none" stroke="#0fbcdc" stroke-width="1.7"/>
<circle cx="648" cy="585.5" r="6.3" fill="#fff" stroke="#1b7393" stroke-opacity="0.6" stroke-width="1"/><circle cx="1054" cy="585.5" r="6.3" fill="#fff" stroke="#1b7393" stroke-opacity="0.6" stroke-width="1"/>
<circle cx="648" cy="786" r="6.3" fill="#fff" stroke="#1b7393" stroke-opacity="0.6" stroke-width="1"/><circle cx="1054" cy="786" r="6.3" fill="#fff" stroke="#1b7393" stroke-opacity="0.6" stroke-width="1"/>
</svg>
<div class="a" style="left:840px;top:811px;width:22px;height:22px;border-radius:50%;background:#fff;box-shadow:0 0 2px rgba(0,0,0,0.15)"></div>
<svg class="a" style="left:843px;top:814px" width="16" height="16"><path d="M3 7A5 5 0 0 1 12.5 5M13 9A5 5 0 0 1 3.5 11" stroke="#0e1318" stroke-width="1.4" fill="none" stroke-linecap="round"/><path d="M12.8 2.3V5.5H9.6M3.2 13.7V10.5H6.4" stroke="#0e1318" stroke-width="1.4" fill="none" stroke-linecap="round" stroke-linejoin="round"/></svg>
<div id="tool" class="a">
  <div class="a" style="left:8px;top:8px;width:174px;height:32px;border:1px solid #c9ccd1;border-radius:4px"></div>
  <div class="a tb" style="left:19px;top:14px;font-size:15.5px">Marykate</div>
  <svg class="a" style="left:159px;top:17px" width="14" height="14"><path d="M2.5 5L7 9.5L11.5 5" stroke="#0e1318" stroke-width="1.6" fill="none" stroke-linecap="round" stroke-linejoin="round"/></svg>
  <div class="a" style="left:190px;top:8px;width:114px;height:32px;border:1px solid #c9ccd1;border-radius:4px"></div>
  <div class="a" style="left:222px;top:9px;width:1px;height:30px;background:#c9ccd1"></div>
  <div class="a" style="left:271px;top:9px;width:1px;height:30px;background:#c9ccd1"></div>
  <svg class="a" style="left:200px;top:17px" width="14" height="14"><path d="M2.5 7H11.5" stroke="#0e1318" stroke-width="1.7"/></svg>
  <div class="a tb" style="left:223px;top:14px;width:48px;text-align:center;-webkit-text-stroke:0.2px currentColor;font-size:14.5px">52</div>
  <svg class="a" style="left:280px;top:17px" width="14" height="14"><path d="M2.5 7H11.5M7 2.5V11.5" stroke="#0e1318" stroke-width="1.7"/></svg>
  <svg class="a" style="left:316px;top:12px" width="24" height="24"><path d="M5.5 16L12 3.5L18.5 16M8 11.2H16" stroke="#0e1318" stroke-width="1.7" fill="none"/><defs><linearGradient id="rb" x1="0" x2="1"><stop offset="0" stop-color="#ff3b30"/><stop offset="0.2" stop-color="#ff9500"/><stop offset="0.4" stop-color="#ffcc00"/><stop offset="0.6" stop-color="#34c759"/><stop offset="0.8" stop-color="#00c7ff"/><stop offset="1" stop-color="#1e5cff"/></linearGradient></defs><rect x="1" y="18" width="22" height="4.5" rx="2.2" fill="url(#rb)"/><rect x="1" y="18" width="22" height="4.5" rx="2.2" fill="none" stroke="#2b6cc4" stroke-width="0.5"/></svg>
  <div class="a" style="left:356px;top:13px;font-size:19px;font-weight:bold;color:#a5a7ab;line-height:22px">B</div>
  <svg class="a" style="left:386px;top:13px" width="20" height="20"><path d="M9 4.5H16M4 17.5H11M12.5 4.5L7.5 17.5" stroke="#a5a7ab" stroke-width="1.7"/></svg>
  <div class="a" style="left:420px;top:12px;width:1px;height:24px;background:#e3e4e7"></div>
  <svg class="a" style="left:433px;top:12px" width="24" height="24"><path d="M3 5.5H21M6 9.5H18M3 13.5H21M7.5 17.5H16.5" stroke="#0e1318" stroke-width="1.7"/></svg>
  <div class="a" style="left:469px;top:12px;width:1px;height:24px;background:#e3e4e7"></div>
  <svg class="a" style="left:482px;top:12px" width="24" height="24"><circle cx="5" cy="5.5" r="1.9" fill="#0e1318"/><circle cx="5" cy="12" r="1.9" fill="#0e1318"/><circle cx="5" cy="18.5" r="1.9" fill="#0e1318"/><path d="M9.5 5.5H20M9.5 12H20M9.5 18.5H20" stroke="#0e1318" stroke-width="1.7"/></svg>
  <div class="a" style="left:518px;top:12px;width:1px;height:24px;background:#e3e4e7"></div>
  <svg class="a" style="left:531px;top:12px" width="24" height="24"><path d="M3 5.5H11M3 12H11M3 18.5H11" stroke="#0e1318" stroke-width="1.7"/><path d="M17 3.5V20.5M14 6.5L17 3.5L20 6.5M14 17.5L17 20.5L20 17.5" stroke="#0e1318" stroke-width="1.7" fill="none" stroke-linejoin="round"/></svg>
  <div class="a" style="left:567px;top:12px;width:1px;height:24px;background:#e3e4e7"></div>
  <div class="a" style="left:576px;top:8px;width:76px;height:32px;border-radius:4px;background:#e3e5e9"></div>
  <div class="a tb" style="left:576px;top:14px;width:76px;text-align:center;-webkit-text-stroke:0.3px currentColor;font-size:15px">Efectos</div>
  <div class="a" style="left:660px;top:12px;width:1px;height:24px;background:#e3e4e7"></div>
  <svg class="a" style="left:673px;top:12px" width="24" height="24"><circle cx="5" cy="12" r="2" fill="#0e1318"/><circle cx="12" cy="12" r="2" fill="#0e1318"/><circle cx="19" cy="12" r="2" fill="#0e1318"/></svg>
  <svg class="a" style="left:811px;top:12px" width="24" height="24"><path d="M3.5 5.5H20.5M9 5.5V3.5H15V5.5" stroke="#0e1318" stroke-width="1.7" fill="none" stroke-linejoin="round"/><path d="M5.5 5.5L6.5 20.5H17.5L18.5 5.5" stroke="#0e1318" stroke-width="1.7" fill="none" stroke-linejoin="round"/><path d="M10 9.5V16.5M14 9.5V16.5" stroke="#0e1318" stroke-width="1.7"/></svg>
</div>
<svg class="a" style="left:818px;top:905px" width="92" height="14"><path d="M0 14C12 14 12 1 26 1H66C80 1 80 14 92 14Z" fill="#fff"/></svg>
<svg class="a" style="left:857px;top:911px" width="14" height="8"><path d="M3.5 6L7 2.5L10.5 6" stroke="#0e1318" stroke-width="1.5" fill="none"/></svg>
<div id="bot" class="a" style="border-top:1px solid #e2e3e6">
  <svg class="a" style="left:14px;top:8px" width="22" height="22"><path d="M2 5H14M2 9H12M2 13H8M2 17H5" stroke="#0e1318" stroke-width="1.6"/><path d="M8.5 18.5L9.3 15.2L17.2 7.3C17.9 6.6 19 6.6 19.7 7.3C20.4 8 20.4 9.1 19.7 9.8L11.8 17.7Z" stroke="#0e1318" stroke-width="1.5" fill="none" stroke-linejoin="round"/></svg>
  <div class="a tb" style="left:44px;top:9px;font-size:15.3px">Notas</div>
  <div class="a tb" style="left:433px;top:9px;font-size:14px">152 %</div>
  <div class="a" style="left:498px;top:19px;width:200px;height:2px;background:#e2e3e5"></div>
  <div class="a" style="left:498px;top:19px;width:57px;height:2px;background:#8e9095"></div>
  <div class="a" style="left:549px;top:13px;width:13px;height:13px;border-radius:50%;background:#0e1318"></div>
  <svg class="a" style="left:720px;top:5px" width="26" height="26"><path d="M6 4.5H21.5V20" stroke="#0e1318" stroke-width="1.5" fill="none"/><rect x="2.5" y="7.5" width="17" height="16" rx="1.5" stroke="#0e1318" stroke-width="1.6" fill="#fff"/><text x="11" y="20" text-anchor="middle" font-family="Liberation Sans" font-size="10.5" font-weight="bold" fill="#0e1318">3</text></svg>
  <svg class="a" style="left:762px;top:8px" width="24" height="24"><path d="M14 4H20V10M20 4L13.5 10.5M10 20H4V14M4 20L10.5 13.5" stroke="#0e1318" stroke-width="1.7" fill="none"/></svg>
  <div class="a" style="left:798px;top:9px;width:1px;height:24px;background:#dfe0e3"></div>
  <svg class="a" style="left:811px;top:8px" width="24" height="24"><circle cx="12" cy="12" r="10" stroke="#0e1318" stroke-width="1.6" fill="none"/><path d="M9.2 9.5A2.8 2.8 0 0 1 14.8 9.5C14.8 11.5 12 11.7 12 14" stroke="#0e1318" stroke-width="1.6" fill="none"/><circle cx="12" cy="17.3" r="1.1" fill="#0e1318"/></svg>
</div>
<div class="a" style="left:1279px;top:72px;width:1px;height:888px;background:#000"></div>
<div class="a" style="left:0;top:959px;width:1280px;height:1px;background:#000"></div>
</body></html>
